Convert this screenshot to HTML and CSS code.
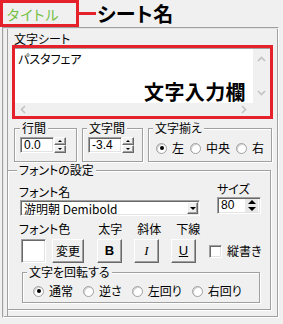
FILE: index.html
```html
<!DOCTYPE html>
<html lang="ja">
<head>
<meta charset="utf-8">
<title>文字シート</title>
<link rel="stylesheet" href="styles.css">
</head>
<body>
<div class="top">
  <div class="title-box"><span class="title">タイトル</span></div>
  <div class="connector"></div>
  <div class="heading">シート名</div>
</div>
<div class="panel">
  <div class="sheet-label">文字シート</div>
  <div class="red-box">
    <div class="textarea">
      <div class="ta-main">
        <div class="ta-text">パスタフェア</div>
        <div class="vscroll">
          <svg class="chev" width="9" height="6" viewBox="0 0 9 6"><path d="M1 5 L4.5 1.5 L8 5" fill="none" stroke="#c2c2c2" stroke-width="1.6"/></svg>
          <svg class="chev" width="9" height="6" viewBox="0 0 9 6"><path d="M1 1 L4.5 4.5 L8 1" fill="none" stroke="#c2c2c2" stroke-width="1.6"/></svg>
        </div>
      </div>
      <div class="ta-bottom">
        <div class="hscroll">
          <svg class="chev" width="6" height="9" viewBox="0 0 6 9"><path d="M5 1 L1.5 4.5 L5 8" fill="none" stroke="#c2c2c2" stroke-width="1.6"/></svg>
          <svg class="chev" width="6" height="9" viewBox="0 0 6 9"><path d="M1 1 L4.5 4.5 L1 8" fill="none" stroke="#c2c2c2" stroke-width="1.6"/></svg>
        </div>
        <div class="corner"></div>
      </div>
    </div>
    <div class="annot">文字入力欄</div>
  </div>

  <div class="group-row">
    <div class="group g-line">
      <div class="legend">行間</div>
      <div class="spin-row">
        <div class="field w34">0.0</div>
        <div class="spin">
          <div class="sbtn"><span class="tri-up"></span></div>
          <div class="sbtn"><span class="tri-down"></span></div>
        </div>
      </div>
    </div>
    <div class="group g-char">
      <div class="legend">文字間</div>
      <div class="spin-row">
        <div class="field w34">-3.4</div>
        <div class="spin">
          <div class="sbtn"><span class="tri-up"></span></div>
          <div class="sbtn"><span class="tri-down"></span></div>
        </div>
      </div>
    </div>
    <div class="group g-align">
      <div class="legend">文字揃え</div>
      <div class="radio-row">
        <label class="radio-item"><span class="radio on"></span>左</label>
        <label class="radio-item"><span class="radio"></span>中央</label>
        <label class="radio-item"><span class="radio"></span>右</label>
      </div>
    </div>
  </div>

  <div class="group g-font">
    <div class="legend">フォントの設定</div>
    <div class="font-top">
      <div class="col-name">
        <div class="lbl">フォント名</div>
        <div class="combo">
          <div class="combo-text">游明朝 Demibold</div>
          <div class="combo-btn"><span class="tri-down big"></span></div>
        </div>
      </div>
      <div class="col-size">
        <div class="lbl">サイズ</div>
        <div class="size-spin">
          <div class="size-text">80</div>
          <div class="spin big">
            <div class="sbtn"><span class="tri-up big"></span></div>
            <div class="sbtn"><span class="tri-down big"></span></div>
          </div>
        </div>
      </div>
    </div>
    <div class="style-labels">
      <span class="sl-color">フォント色</span>
      <span class="sl-b">太字</span>
      <span class="sl-i">斜体</span>
      <span class="sl-u">下線</span>
    </div>
    <div class="style-row">
      <div class="swatch"></div>
      <div class="btn btn-change">変更</div>
      <div class="btn btn-b">B</div>
      <div class="btn btn-i">I</div>
      <div class="btn btn-u">U</div>
      <label class="check-item"><span class="checkbox"></span>縦書き</label>
    </div>
    <div class="group g-rot">
      <div class="legend">文字を回転する</div>
      <div class="radio-row rot">
        <label class="radio-item"><span class="radio on"></span>通常</label>
        <label class="radio-item"><span class="radio"></span>逆さ</label>
        <label class="radio-item"><span class="radio"></span>左回り</label>
        <label class="radio-item"><span class="radio"></span>右回り</label>
      </div>
    </div>
  </div>
</div>
</body>
</html>
```
FILE: styles.css
```css
* { box-sizing: border-box; }
html, body { margin: 0; padding: 0; }
body {
  width: 283px;
  height: 324px;
  overflow: hidden;
  background: #f0f0f0;
  color: #000;
  font-family: "Noto Sans CJK JP", "Noto Sans", sans-serif;
  font-size: 12px;
  line-height: 14px;
  font-feature-settings: "palt";
}

/* top annotation bar */
.top { display: flex; align-items: center; height: 27px; }
.title-box {
  width: 79px; height: 27px;
  border: 3px solid #e5222b;
  padding-left: 4px;
  display: flex; align-items: center;
}
.title { color: #74c044; font-size: 14px; letter-spacing: 1px; }
.connector { width: 17px; height: 3px; background: #e5222b; }
.heading { font-size: 20px; font-weight: bold; line-height: 27px; margin-left: 1px; letter-spacing: 0.5px; }

/* outer panel */
.panel {
  margin-left: 2px;
  width: 277px;
  height: 291px;
  border: 1px solid;
  border-color: #a0a0a0 #ffffff #ffffff #a0a0a0;
  box-shadow: inset 1px 1px 0 #e3e3e3, inset -1px -1px 0 #a0a0a0, inset 4px 0 0 #f0f0f0, inset 5px 0 0 #a0a0a0;
}
.sheet-label { margin-left: 11px; padding-top: 4px; }

.red-box {
  position: relative;
  margin: -1px 0 0 9px;
  width: 261px;
  height: 74px;
  border: 3px solid #e5222b;
}
.textarea {
  height: 100%;
  display: flex; flex-direction: column;
  border-top: 1px solid #a0a0a0;
  background: #fff;
}
.ta-main { flex: 1; display: flex; }
.ta-text { flex: 1; padding: 3px 0 0 3px; }
.vscroll {
  width: 17px;
  background: #f0f0f0;
  display: flex; flex-direction: column; align-items: center; justify-content: space-between;
  padding: 7px 0 7px;
}
.ta-bottom { height: 13px; display: flex; }
.hscroll {
  flex: 1;
  background: #f0f0f0;
  display: flex; align-items: center; justify-content: space-between;
  padding: 0 6px 0 5px;
}
.corner { width: 17px; background: #f0f0f0; }
.chev { display: block; }
.annot {
  position: absolute;
  left: 129px; top: 33px;
  font-size: 20px; line-height: 22px; font-weight: bold;
  letter-spacing: 0.4px;
}

/* group boxes */
.group {
  border: 1px solid #a0a0a0;
  box-shadow: inset 1px 1px 0 #fff, 1px 1px 0 #fff;
}
.legend {
  width: max-content;
  margin-top: -8px;
  padding: 0 2px;
  background: #f0f0f0;
  line-height: 14px;
}
.group-row { display: flex; gap: 5px; margin: 9px 0 0 11px; }
.g-line { width: 63px; height: 34px; }
.g-char { width: 61px; height: 34px; }
.g-align { width: 124px; height: 34px; }
.g-line .legend { margin-left: 5px; }
.g-char .legend { margin-left: 4px; }
.g-align .legend { margin-left: 4px; }

.spin-row { display: flex; margin: 2px 0 0 5px; }
.field {
  height: 16px;
  background: #fff;
  border: 1px solid;
  border-color: #a0a0a0 #fff #fff #a0a0a0;
  box-shadow: inset 1px 1px 0 #696969, inset -1px -1px 0 #e3e3e3;
  padding: 1px 0 0 3px;
  line-height: 13px;
  font-family: "Liberation Sans", "Noto Sans CJK JP", sans-serif;
  font-size: 12px;
}
.w34 { width: 34px; }
.spin { width: 12px; height: 16px; display: flex; flex-direction: column; }
.sbtn {
  flex: 1;
  background: #f0f0f0;
  border: 1px solid;
  border-color: #fff #696969 #696969 #fff;
  box-shadow: inset -1px -1px 0 #a0a0a0;
  display: flex; align-items: center; justify-content: center;
}
.tri-up { width: 0; height: 0; border-left: 2px solid transparent; border-right: 2px solid transparent; border-bottom: 2px solid #000; }
.tri-down { width: 0; height: 0; border-left: 2px solid transparent; border-right: 2px solid transparent; border-top: 2px solid #000; }
.tri-up.big { border-left-width: 4px; border-right-width: 4px; border-bottom-width: 4px; }
.tri-down.big { border-left-width: 4px; border-right-width: 4px; border-top-width: 4px; }

.radio-row { display: flex; gap: 6px; margin: 6px 0 0 7px; }
.radio-item { display: flex; align-items: center; gap: 5px; }
.radio {
  width: 11px; height: 11px;
  border-radius: 50%;
  background: #fff;
  border: 1px solid #a0a0a0;
  box-shadow: inset 1px 1px 0 #d0d0d0;
  display: flex; align-items: center; justify-content: center;
}
.radio.on::after { content: ""; width: 4px; height: 4px; border-radius: 50%; background: #000; }

/* font settings */
.g-font { width: 264px; height: 140px; margin: 8px 0 0 4px; }
.g-font .legend { margin-left: 9px; }
.font-top { display: flex; }
.col-name { margin-left: 11px; }
.col-name .lbl { margin-top: 8px; }
.combo {
  margin: 1px 0 0 1px;
  width: 180px; height: 16px;
  background: #fff;
  border: 1px solid;
  border-color: #a0a0a0 #fff #fff #a0a0a0;
  box-shadow: inset 1px 1px 0 #696969, inset -1px -1px 0 #e3e3e3;
  display: flex;
  padding: 1px;
}
.combo-text { flex: 1; padding-left: 2px; line-height: 13px; }
.combo-btn {
  width: 11px;
  background: #f0f0f0;
  border: 1px solid;
  border-color: #fff #696969 #696969 #fff;
  box-shadow: inset -1px -1px 0 #a0a0a0;
  display: flex; align-items: center; justify-content: center;
}
.combo-btn .tri-down.big { border-left-width: 3px; border-right-width: 3px; border-top-width: 3px; }
.col-size { margin-left: 17px; }
.col-size .lbl { margin-top: 5px; }
.size-spin {
  margin-top: 1px;
  width: 44px; height: 17px;
  background: #fff;
  border: 1px solid;
  border-color: #a0a0a0 #fff #fff #a0a0a0;
  box-shadow: inset 1px 1px 0 #696969, inset -1px -1px 0 #e3e3e3;
  display: flex;
  padding: 1px;
}
.size-text { flex: 1; padding-left: 2px; line-height: 13px; font-family: "Liberation Sans", sans-serif; }
.spin.big { width: 13px; height: 13px; margin-right: 1px; }
.spin.big .sbtn { box-shadow: none; border-width: 0; background: #e8e8e8; }

.style-labels { position: relative; height: 14px; margin-top: 6px; display: flex; }
.sl-color { margin-left: 11px; }
.sl-b { margin-left: 28px; }
.sl-i { margin-left: 15px; }
.sl-u { margin-left: 15px; }

.style-row { display: flex; align-items: center; margin: 3px 0 0 13px; height: 24px; }
.swatch {
  width: 25px; height: 24px;
  background: #fff;
  border: 1px solid;
  border-color: #a0a0a0 #fff #fff #a0a0a0;
  box-shadow: inset 1px 1px 0 #696969, inset -1px -1px 0 #e3e3e3;
}
.btn {
  height: 24px;
  background: #f0f0f0;
  border: 1px solid;
  border-color: #fff #696969 #696969 #fff;
  box-shadow: inset -1px -1px 0 #a0a0a0;
  display: flex; align-items: center; justify-content: center;
}
.btn-change { width: 32px; margin-left: 6px; }
.btn-b { width: 25px; margin-left: 13px; font-family: "Liberation Sans", sans-serif; font-weight: bold; font-size: 13px; }
.btn-i { width: 25px; margin-left: 12px; font-family: "Liberation Serif", serif; font-style: italic; font-size: 13px; }
.btn-u { width: 25px; margin-left: 12px; font-family: "Liberation Sans", sans-serif; text-decoration: underline; font-size: 13px; }
.check-item { display: flex; align-items: center; gap: 5px; margin-left: 13px; }
.checkbox {
  width: 13px; height: 13px;
  background: #fff;
  border: 1px solid;
  border-color: #a0a0a0 #fff #fff #a0a0a0;
  box-shadow: inset 1px 1px 0 #696969, inset -1px -1px 0 #e3e3e3;
}

.g-rot { width: 238px; height: 31px; margin: 9px 0 0 14px; }
.g-rot .legend { margin-left: 4px; }
.radio-row.rot { gap: 10px; margin: 5px 0 0 10px; }
```
